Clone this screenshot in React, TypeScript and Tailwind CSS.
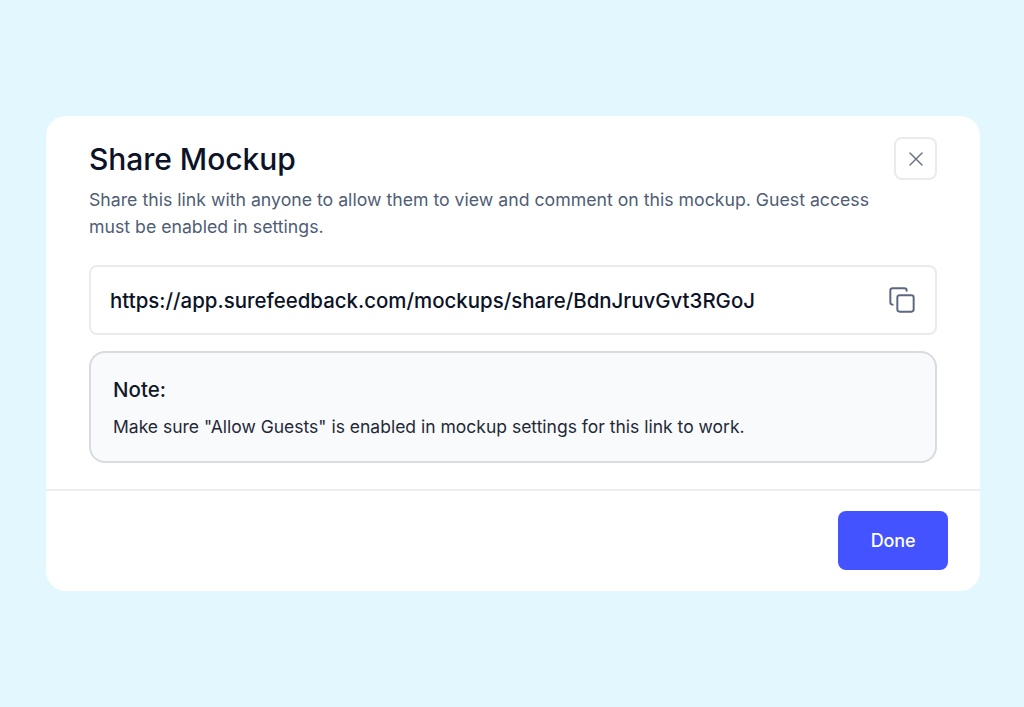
import { X, Copy } from 'lucide-react'

export default function App() {
  return (
    <div className="min-h-[707px] bg-[#e3f7ff] pt-[116px] pl-[46px] font-['Inter',sans-serif]">
      <div className="w-[934px] h-[475px] flex flex-col rounded-[20px] bg-white">
        <div className="px-[43px] pt-[21px]">
          <div className="flex items-start justify-between">
            <h2 className="mt-[2px] text-[30px] leading-[40px] font-[550] tracking-[-0.05px] text-[#0d1326]">Share Mockup</h2>
            <button className="flex h-[43px] w-[43px] items-center justify-center rounded-[8px] border-2 border-[#e9ebef] text-[#6b7280]">
              <X className="h-[24px] w-[24px]" strokeWidth={1.5} />
            </button>
          </div>
          <p className="mt-[6px] max-w-[800px] text-[17.7px] leading-[27px] text-[#4f5d75]">
            Share this link with anyone to allow them to view and comment on this mockup. Guest access must be enabled in settings.
          </p>

          <div className="mt-[25px] flex h-[70px] items-center justify-between rounded-[8px] border-2 border-[#e9ebef] pl-[19px] pr-[19px]">
            <span className="pt-[2px] text-[20.45px] font-[550] text-[#0d1326]">https://app.surefeedback.com/mockups/share/BdnJruvGvt3RGoJ</span>
            <Copy className="h-[28px] w-[28px] text-[#5b6880]" strokeWidth={1.7} />
          </div>

          <div className="mt-[16px] h-[112px] rounded-[16px] border-2 border-[#d8dbe1] bg-[#f9fafc] px-[22px] pt-[23px]">
            <div className="text-[20.5px] leading-[28px] font-[550] text-[#111827]">Note:</div>
            <p className="mt-[9px] text-[17.5px] leading-[27px] text-[#1f2937]">
              Make sure "Allow Guests" is enabled in mockup settings for this link to work.
            </p>
          </div>
        </div>

        <div className="mt-[26px] flex flex-1 items-start justify-end border-t-2 border-[#eceef1] pt-[20px] pr-[32px]">
          <button className="h-[59px] w-[110px] rounded-[8px] bg-[#4353ff] text-[18px] font-medium tracking-[-0.15px] text-white">Done</button>
        </div>
      </div>
    </div>
  )
}
